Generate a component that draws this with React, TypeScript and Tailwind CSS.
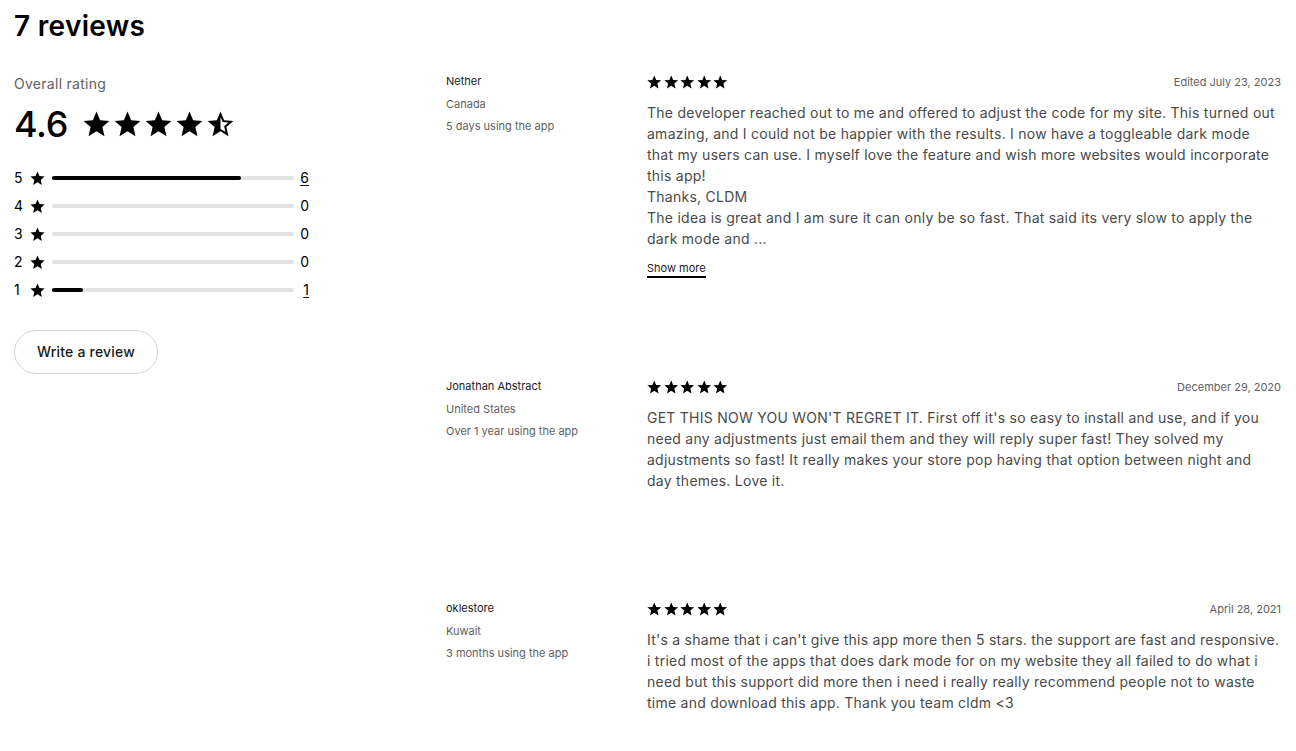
import React from "react";

type Review = {
  id: number;
  name: string;
  country: string;
  tenure: string;
  date: string;
  lines: string[];
  truncated?: boolean;
};

// body lines are kept as they wrap in the widget
const reviews: Review[] = [
  {
    id: 1,
    name: "Nether",
    country: "Canada",
    tenure: "5 days using the app",
    date: "Edited July 23, 2023",
    lines: [
      "The developer reached out to me and offered to adjust the code for my site. This turned out",
      "amazing, and I could not be happier with the results. I now have a toggleable dark mode",
      "that my users can use. I myself love the feature and wish more websites would incorporate",
      "this app!",
      "Thanks, CLDM",
      "The idea is great and I am sure it can only be so fast. That said its very slow to apply the",
      "dark mode and ...",
    ],
    truncated: true,
  },
  {
    id: 2,
    name: "Jonathan Abstract",
    country: "United States",
    tenure: "Over 1 year using the app",
    date: "December 29, 2020",
    lines: [
      "GET THIS NOW YOU WON'T REGRET IT. First off it's so easy to install and use, and if you",
      "need any adjustments just email them and they will reply super fast! They solved my",
      "adjustments so fast! It really makes your store pop having that option between night and",
      "day themes. Love it.",
    ],
  },
  {
    id: 3,
    name: "oklestore",
    country: "Kuwait",
    tenure: "3 months using the app",
    date: "April 28, 2021",
    lines: [
      "It's a shame that i can't give this app more then 5 stars. the support are fast and responsive.",
      "i tried most of the apps that does dark mode for on my website they all failed to do what i",
      "need but this support did more then i need i really really recommend people not to waste",
      "time and download this app. Thank you team cldm <3",
    ],
  },
];

const breakdown = [
  { stars: 5, count: 6, pct: 78, link: true },
  { stars: 4, count: 0, pct: 0, link: false },
  { stars: 3, count: 0, pct: 0, link: false },
  { stars: 2, count: 0, pct: 0, link: false },
  { stars: 1, count: 1, pct: 13, link: true },
];

const StarIcon = ({ className }: { className: string }) => (
  <svg viewBox="0 0 24 24" className={className} fill="currentColor">
    <path d="M12 17.27L18.18 21l-1.64-7.03L22 9.24l-7.19-.61L12 2 9.19 8.63 2 9.24l5.46 4.73L5.82 21z" />
  </svg>
);

const HalfStarIcon = ({ className }: { className: string }) => (
  <svg viewBox="0 0 24 24" className={className} fill="currentColor">
    <path d="M22 9.24l-7.19-.62L12 2 9.19 8.63 2 9.24l5.46 4.73L5.82 21 12 17.27 18.18 21l-1.63-7.03L22 9.24zM12 15.4V6.1l1.71 4.04 4.38.38-3.32 2.88 1 4.28L12 15.4z" />
  </svg>
);

const App = () => {
  return (
    <div className="min-h-screen bg-white px-[14px] pt-[8px] text-black" style={{ fontFamily: "Inter, 'Noto Sans', sans-serif" }}>
      <h1 className="text-[28px] leading-[36px] font-semibold tracking-[0.3px]">7 reviews</h1>

      <div className="flex mt-[30px]">
        {/* summary */}
        <div className="w-[295px] shrink-0">
          <p className="text-sm leading-5 tracking-[0.28px] text-[#616161]">Overall rating</p>
          <div className="flex items-center mt-[10px]">
            <span className="text-[36px] leading-[40px] font-medium tracking-[-0.3px]">4.6</span>
            <div className="flex items-center ml-[13px]">
              <StarIcon className="w-[31px] h-[31px]" />
              <StarIcon className="w-[31px] h-[31px]" />
              <StarIcon className="w-[31px] h-[31px]" />
              <StarIcon className="w-[31px] h-[31px]" />
              <HalfStarIcon className="w-[31px] h-[31px]" />
            </div>
          </div>

          <div className="flex flex-col mt-[20px]">
            {breakdown.map((row) => (
              <div key={row.stars} className="flex items-center h-[28px] text-sm">
                <span className="w-[14px]">{row.stars}</span>
                <StarIcon className="w-[17px] h-[17px] ml-[1px]" />
                <div className="flex-1 h-[4px] rounded-full bg-[#e3e3e3] ml-[6px] mr-[6px]">
                  {row.pct > 0 && (
                    <div className="h-full rounded-full bg-black" style={{ width: `${row.pct}%` }} />
                  )}
                </div>
                <span className={`w-[9px] text-right ${row.link ? "underline underline-offset-2" : ""}`}>{row.count}</span>
              </div>
            ))}
          </div>

          <button className="mt-[26px] h-[44px] px-[22px] rounded-full border border-[#d4d4d4] text-sm font-medium tracking-[0.2px] text-[#1a1a1a]">
            Write a review
          </button>
        </div>

        {/* reviews */}
        <div className="flex-1 ml-[137px] mr-[1px] flex flex-col gap-[110px]">
          {reviews.map((review) => (
            <div key={review.id} className="flex">
              <div className="w-[201px] shrink-0 flex flex-col gap-[6.5px] -mt-[1px] text-[11px] leading-4">
                <span className="text-[#1a1a1a]">{review.name}</span>
                <span className="text-[#616161]">{review.country}</span>
                <span className="text-[#616161]">{review.tenure}</span>
              </div>
              <div className="flex-1 min-w-0">
                <div className="flex items-center justify-between h-[16px]">
                  <div className="flex -ml-[1px]">
                    {[0, 1, 2, 3, 4].map((i) => (
                      <StarIcon key={i} className="w-[16.5px] h-[16.5px]" />
                    ))}
                  </div>
                  <span className="text-[11px] text-[#616161]">{review.date}</span>
                </div>
                <div className="mt-[12px] text-sm leading-[21px] tracking-[0.25px] text-[#4a4a4a] whitespace-nowrap">
                  {review.lines.map((line, i) => (
                    <p key={i}>{line}</p>
                  ))}
                </div>
                {review.truncated && (
                  <div className="flex mt-[11px] -mb-[9px]">
                    <button className="text-[11px] leading-4 text-[#1a1a1a] border-b-2 border-black">
                      Show more
                    </button>
                  </div>
                )}
              </div>
            </div>
          ))}
        </div>
      </div>
    </div>
  );
};

export default App;
